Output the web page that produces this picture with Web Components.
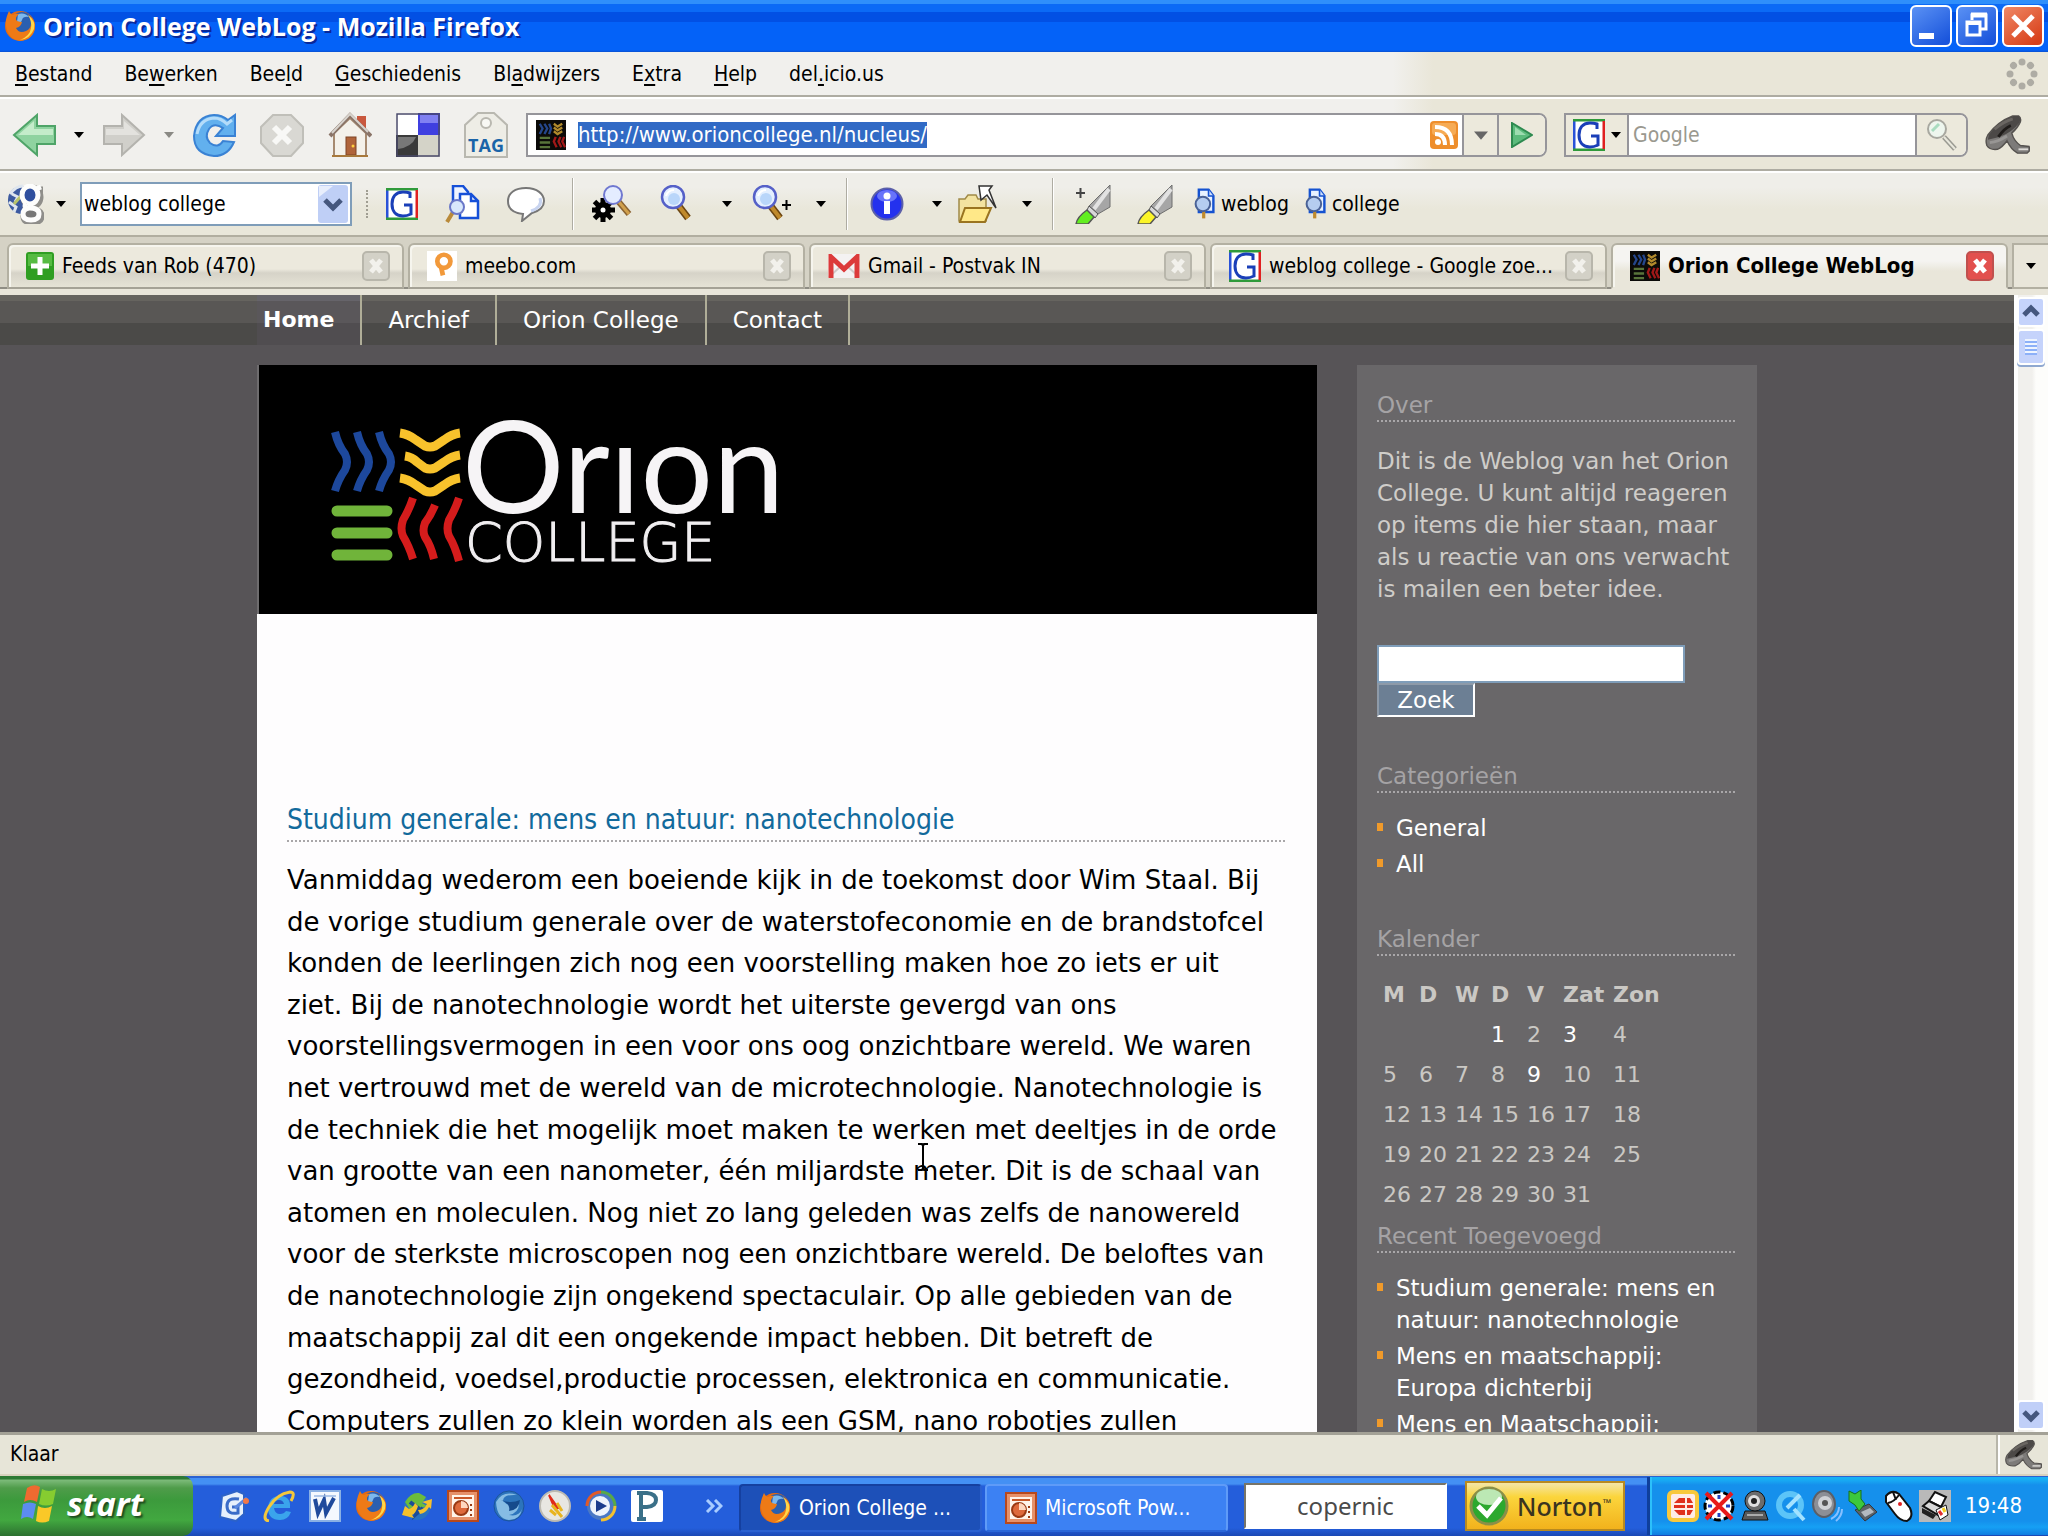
<!DOCTYPE html>
<html lang="nl">
<head>
<meta charset="utf-8">
<title>Orion College WebLog - Mozilla Firefox</title>
<style>
html,body{margin:0;height:100%}
body{font:21px/26px "DejaVu Sans Condensed","Noto Sans",sans-serif;color:#000;background:#575457;overflow:hidden}
</style>
</head>
<body>
<desktop-screen></desktop-screen>
<script>
const BASE = `
*{box-sizing:border-box}
button,input,select{font:inherit;color:inherit;margin:0;padding:0;border:0;background:none;border-radius:0;outline:0;appearance:none}
button{display:flex;align-items:center;justify-content:center}
a{color:inherit;text-decoration:none}
.grow{flex:1}
`;
const define = (name, css, html, after) => customElements.define(name, class extends HTMLElement {
  constructor() {
    super();
    const t = document.createElement('template');
    t.innerHTML = `<style>${BASE}${css}</style>${html}`;
    this.attachShadow({mode: 'open'}).append(t.content.cloneNode(true));
    if (after) after(this, this.shadowRoot);
  }
});

/* ---------- icons ---------- */
const lens = (h) => `<path d="M18 20 28 33" stroke="#6b4510" stroke-width="7"/><path d="M18 20 28 33" stroke="#c08a2c" stroke-width="4"/><ellipse cx="13" cy="12" rx="11" ry="11" fill="#e4efff" stroke="#5560c8" stroke-width="2.5"/><ellipse cx="14" cy="14" rx="6" ry="6" fill="#b9d6fa"/><path d="M6 11q2-6 8-6" stroke="#fff" stroke-width="2" fill="none"/>${h||''}`;
const docIcon = `<path d="M6 2h12l6 8v20H6z" fill="#e8f2ff" stroke="#1552d0" stroke-width="3"/><path d="M18 2v8h6" fill="#cfe0ff" stroke="#1552d0" stroke-width="2"/><path d="M12 27v11" stroke="#c08a2c" stroke-width="4"/><circle cx="11" cy="20" r="9" fill="#b5cdf0" stroke="#4a6296" stroke-width="2.5"/>`;
const orion = `<rect width="32" height="32" fill="#0b0a08"/><g fill="none" stroke-width="2.5"><path stroke="#24468c" d="M4 4l3 5-3 6M9 4l3 5-3 6M14 4l2 5-2 6"/><path stroke="#b18a2c" d="M19 4l4 3 5-3M19 8l4 3 5-3M19 12l4 3 5-3"/><path stroke="#58743a" d="M4 19h11M4 24h11M4 29h11"/><path stroke="#a01818" d="M21 18l-2 5 3 6M26 18l-2 5 3 6M30 18l-2 5 3 6"/></g>`;
const google = `<rect width="32" height="32" fill="#fff"/><path d="M1 0v32" stroke="#2a52d8" stroke-width="3"/><path d="M0 1h32M0 31h32" stroke="#2f9a3a" stroke-width="3"/><path d="M31 2v28" stroke="#e02020" stroke-width="3"/><path d="M24 10V5q-3-1-7-1C9 4 6 10 6 16s3 12 11 12q4 0 8-2v-9h-7" fill="none" stroke="#1a3fb8" stroke-width="3"/>`;
const firefox = `<circle cx="16" cy="16" r="15" fill="#e66a12"/><circle cx="18" cy="13" r="11" fill="#2a5fb0"/><path d="M14 4q7-2 11 3-6-1-7 3t-5 2z" fill="#7db8ec"/><path d="M2 16C1 10 3 6 5 1q2 4 4 4 3-2 6-1-5 4-2 7 3 1 5 1-1 5-6 6 3 6 10 3 5-2 5-8 0-5-3-8 8 4 7 13-2 12-15 13Q4 29 2 16z" fill="#ee7a16"/><path d="M24 5q8 6 6 14-4 10-14 11 10-4 11-12 1-7-3-13z" fill="#ffd84a"/>`;
const ppt = `<rect x="1" y="1" width="30" height="30" fill="#e6916a" stroke="#b8481c" stroke-width="2"/><rect x="5" y="5" width="22" height="22" fill="#fff4ea"/><path d="M7 8h18" stroke="#c85828" stroke-width="2"/><circle cx="14" cy="18" r="7" fill="#de6a3c" stroke="#9a3a14" stroke-width="2"/><path d="M14 18v-7a7 7 0 0 1 7 7z" fill="#ffd8c0"/><path d="M24 14v2m0 3v2m0 3v2" stroke="#9a3a14" stroke-width="2"/>`;
const shell = `<path d="M3 33Q1 27 4 22 14 8 30 2h6q3 2 2 6-3 7-9 12 2 8 9 13l9 1 1 4-3 3H35q-7-4-11-13-5 7-10 9Q6 38 3 33z" fill="#7d7b79" stroke="#55524f" stroke-width="1.500"/><path d="M5 22Q15 7 31 2h5q3 3 1 7-8 11-21 15l-12 3z" fill="#4c4947"/><path d="M15 24q6-9 13-12" fill="none" stroke="#1f1c1a" stroke-width="3"/><path d="M11 16q9-8 19-11" fill="none" stroke="#6a6662" stroke-width="3"/><path d="M6 30q9-1 18-7" fill="none" stroke="#989694" stroke-width="3"/><path d="M36 37h10" stroke="#dcdad6" stroke-width="2"/>`;
const close = (b, f, x) => `<rect x="1" y="1" width="26" height="28" rx="4" fill="${f}" stroke="${b}" stroke-width="2"/><path d="M9 9l10 12M19 9L9 21" stroke="${x}" stroke-width="5"/>`;
const hl = (c, p) => `<path d="M36 1v22L24 30 15 22z" fill="#a6a6a6" stroke="#6e6e6e"/><path d="M35 5 20 25" stroke="#e2e2e2" stroke-width="4"/><path d="M15 22l9 8-3 4-8-8z" fill="#d8d8d8" stroke="#555"/><path d="M13 26l7 7-6 7H2q1-7 11-14z" fill="${c}" stroke="#555" stroke-width="1.5"/>${p?'<path d="M2 9h9M6.500 4v10" stroke="#444" stroke-width="2"/>':''}`;
const winFrame = (c1, c2, id) => `<defs><linearGradient id="${id}" x2=".7" y2="1"><stop stop-color="${c1}"/><stop offset="1" stop-color="${c2}"/></linearGradient></defs><rect x="1" y="1" width="40" height="40" rx="5" fill="url(#${id})" stroke="#fff" stroke-width="2"/>`;
const ICONS = {
  caret: ['0 0 10 8', `<path d="M0 1h10L5 7z" fill="currentColor"/>`],
  firefox: ['0 0 32 32', firefox],
  min: ['0 0 42 42', winFrame('#5c93f5','#1a55dc','g') + `<rect x="9" y="28" width="15" height="6" fill="#fff"/>`],
  restore: ['0 0 42 42', winFrame('#5c93f5','#1a55dc','g') + `<path d="M16 15V10h14v14h-5" fill="none" stroke="#fff" stroke-width="3"/><path d="M15 10h16" stroke="#fff" stroke-width="5"/><rect x="11" y="17" width="13" height="13" fill="#2f6ce8" stroke="#fff" stroke-width="3"/><path d="M10 18h15" stroke="#fff" stroke-width="4"/>`],
  close: ['0 0 42 42', winFrame('#f08a68','#d8401a','g') + `<path d="M11 11l20 20M31 11L11 31" stroke="#fff" stroke-width="5"/>`],
  throbber: ['0 0 32 32', [0,1,2,3,4,5,6,7].map(i => `<circle cx="16" cy="4" r="3.500" fill="#aeaca4" transform="rotate(${i*45} 16 16)"/>`).join('')],
  back: ['0 0 44 44', `<path d="M2 22 25 2v11h18v18H25v11z" fill="#8fd3a0" stroke="#4fa468" stroke-width="2"/><path d="M6 22 22 8v8h19v6z" fill="#c4ecca"/>`],
  forward: ['0 0 44 44', `<path d="M42 22 20 2v11H2v18h18v11z" fill="#d0cfca" stroke="#b4b3ae" stroke-width="2"/><path d="M38 22 22 8v8H4v6z" fill="#e3e2de"/>`],
  reload: ['0 0 44 44', `<path d="M43 2v21H24l7-8q-9-6-14 1-5 8 1 14 8 6 13-2l11 1q-6 14-20 14Q2 41 2 23 4 3 22 2q8 0 14 5z" fill="#62b0ee" stroke="#3a82d4" stroke-width="2"/><path d="M5 21Q8 6 22 5q7 0 13 6l5-4" fill="none" stroke="#b4dcfa" stroke-width="3"/>`],
  stop: ['0 0 44 44', `<path d="M13 2h18l12 12v16L31 43H13L1 30V14z" fill="#d9d8d3" stroke="#c0bfb9" stroke-width="2"/><path d="M14 14l16 16M30 14L14 30" stroke="#f8f8f6" stroke-width="6"/>`],
  home: ['0 0 44 46', `<rect x="29" y="4" width="9" height="13" fill="#c9583e"/><path d="M6 21v23h32V21L22 6z" fill="#f4f1ea" stroke="#a68a70" stroke-width="2"/><path d="M2 24 22 3l21 21" fill="none" stroke="#8a7468" stroke-width="4"/><path d="M4 21 22 2l18 18" fill="none" stroke="#d8d4ce" stroke-width="2"/><rect x="18" y="25" width="10" height="18" fill="#b0643a" stroke="#7e4424"/><circle cx="25" cy="34" r="1.500" fill="#ffd040"/><path d="M4 44h36" stroke="#a8793c" stroke-width="2"/>`],
  delicious: ['0 0 44 44', `<rect width="22" height="22" fill="#fff"/><rect x="22" width="22" height="22" fill="#3f3fe0"/><rect x="24" y="2" width="18" height="8" fill="#8080f2"/><rect y="22" width="22" height="22" fill="#3a3a3a"/><path d="M2 24h18q-4 10-18 12z" fill="#787878"/><rect x="22" y="22" width="22" height="22" fill="#d4d3c8"/><path d="M1 1h42v42H1z" fill="none" stroke="#4a4a6a" stroke-width="1.500"/>`],
  tag: ['0 0 44 46', `<path d="M1 45V13L14 1h16l13 12v32z" fill="#eeede6" stroke="#b9b8b0" stroke-width="2"/><circle cx="22" cy="11" r="5" fill="#f8f8f4" stroke="#b9b8b0" stroke-width="2"/><text x="22" y="40" font-family="Open Sans, sans-serif" font-weight="700" font-size="18" text-anchor="middle" fill="#1a64a8">TAG</text>`],
  orion: ['0 0 32 32', orion],
  rss: ['0 0 28 28', `<rect width="28" height="28" rx="4" fill="#ee8e2c"/><rect x="2" y="2" width="24" height="12" rx="3" fill="#f6ab55"/><circle cx="8" cy="21" r="3" fill="#fff"/><path d="M5 13q10 0 10 11M5 6q17 0 17 18" fill="none" stroke="#fff" stroke-width="4"/>`],
  go: ['0 0 22 26', `<path d="M1 1 21 13 1 25z" fill="#5cbb7c" stroke="#2e8a50" stroke-width="2"/><path d="M4 5l11 8H4z" fill="#9ddcb0"/>`],
  google: ['0 0 32 32', google],
  magnify: ['0 0 32 32', `<path d="M18 18 29 30" stroke="#9a9a92" stroke-width="5"/><path d="M18 18 29 30" stroke="#e8e7dc" stroke-width="2"/><circle cx="11" cy="10" r="9" fill="#eef6ee" stroke="#a8a8a0" stroke-width="2"/><path d="M6 12 13 5" stroke="#a9dcc0" stroke-width="3"/>`],
  shell: ['0 0 48 44', shell],
  globe: ['0 0 36 40', `<circle cx="14" cy="16" r="14" fill="#3c5aa0"/><path d="M2 10q6-8 13-8M1 18l7 5-2 5M4 10l6 3-3 5" stroke="#dfe6ee" stroke-width="3" fill="none"/><path d="M6 20l7-8" stroke="#b9c46a" stroke-width="3"/><g fill="none" stroke="#8f8e8a" stroke-width="7"><ellipse cx="24" cy="13" rx="8" ry="9"/><path d="M32 6h3M19 21q-3 5 4 5 10 0 10 6t-9 6q-8 0-8-6 0-5 6-6"/></g><g fill="#2f4f9e" stroke="#fdfdfc" stroke-width="5"><ellipse cx="22" cy="11" rx="8" ry="9"/><path fill="#777" d="M28 5l5-2M18 19q-3 5 4 5 9 0 9 6t-8 6q-8 0-8-6 0-5 6-6"/></g>`],
  combo: ['0 0 30 38', `<rect width="30" height="38" rx="3" fill="#bfcff6"/><path d="M1 1h14L1 12z" fill="#e8eefc"/><path d="M7 15l8 8 8-8" fill="none" stroke="#45577e" stroke-width="5"/>`],
  pages: ['0 0 36 38', `<path d="M9 1h10l5 6v18H9z" fill="#eef4ff" stroke="#1650d8" stroke-width="2.500"/><path d="M16 9h11l7 7v17H16z" fill="#fff" stroke="#1650d8" stroke-width="2.500"/><path d="M27 9v7h7" fill="none" stroke="#1650d8" stroke-width="2.500"/><path d="M9 27 3 37" stroke="#b98a3a" stroke-width="4"/><circle cx="13" cy="22" r="7" fill="#d8e8fc" stroke="#6a78c8" stroke-width="2"/>`],
  bubble: ['0 0 40 36', `<path d="M20 2c11 0 18 6 18 13 0 6-5 10-12 12L16 35l1-7C7 27 2 22 2 15 2 7 9 2 20 2z" fill="#fff" stroke="#777" stroke-width="2"/><path d="M34 12q3 9-9 13" fill="none" stroke="#c8d4f0" stroke-width="3"/>`],
  gearlens: ['0 0 40 38', `<g transform="translate(11 25)"><circle r="8" fill="#000"/>${[0,1,2,3,4,5,6,7].map(i => `<rect x="-2.500" y="-12" width="5" height="7" fill="#000" transform="rotate(${i*45})"/>`).join('')}<circle r="2.500" fill="#fff"/></g><path d="M26 16 37 29" stroke="#8a6230" stroke-width="6"/><path d="M27 17 37 29" stroke="#d0a04c" stroke-width="3"/><circle cx="21" cy="10" r="9" fill="#e4ecff" stroke="#7078d0" stroke-width="2"/>`],
  lens: ['0 0 34 38', lens()],
  lensplus: ['0 0 40 38', lens(`<path d="M30 20h9M34.500 15v10" stroke="#000" stroke-width="2"/>`)],
  info: ['0 0 34 34', `<circle cx="17" cy="17" r="15.500" fill="#2431ee" stroke="#5c60a8" stroke-width="2"/><ellipse cx="17" cy="9" rx="10" ry="6" fill="#8690ff" opacity=".7"/><circle cx="17" cy="9" r="3.500" fill="#fff"/><rect x="14" y="14" width="6" height="13" fill="#fff"/>`],
  folder: ['0 0 40 40', `<path d="M1 37V15h6l3-4h8l2 4h8v22z" fill="#f3e3a0" stroke="#a08a48" stroke-width="1.500"/><path d="M7 24h26l-6 14H2z" fill="#ffe888" stroke="#9a7420" stroke-width="2"/><path d="M21 2h13l-3 4 7 18-9-13-6 5z" fill="#fff" stroke="#333" stroke-width="1.500"/>`],
  hlgreen: ['0 0 38 40', hl('#62ee20', 1)],
  hlyellow: ['0 0 38 40', hl('#fbf528')],
  doc: ['0 0 26 40', docIcon],
  plus: ['0 0 28 28', `<rect width="28" height="28" rx="3" fill="#2f9e22"/><rect x="2" y="2" width="24" height="12" fill="#56bb42"/><path d="M14 5v18M5 14h18" stroke="#fff" stroke-width="5"/>`],
  meebo: ['0 0 32 32', `<rect width="32" height="32" fill="#fff"/><circle cx="18" cy="11" r="7" fill="none" stroke="#f2993a" stroke-width="5"/><path d="M15 17l2 9" stroke="#f2993a" stroke-width="5"/>`],
  gmail: ['0 0 32 24', `<rect width="32" height="24" fill="#f4f2f2"/><path d="M1 23 13 12M31 23 19 12" stroke="#d0c8c8" stroke-width="2"/><path d="M3 24V3l13 12L29 3v21" fill="none" stroke="#dc3a3a" stroke-width="5"/>`],
  tabx: ['0 0 28 30', close('#b8b6ab','#d3d1c7','#f2f1ec')],
  tabxred: ['0 0 28 30', close('#c0504e','#e2504e','#fff')],
  up: ['0 0 28 30', `<rect x="1" y="1" width="26" height="28" rx="3" fill="#c5d3fb" stroke="#fff" stroke-width="2"/><path d="M7 18l7-7 7 7" fill="none" stroke="#45577e" stroke-width="5"/>`],
  down: ['0 0 28 30', `<rect x="1" y="1" width="26" height="28" rx="3" fill="#c0cff8" stroke="#fff" stroke-width="2"/><path d="M7 12l7 7 7-7" fill="none" stroke="#45577e" stroke-width="5"/>`],
  flag: ['0 0 36 40', `<path d="M6 4Q13-1 19 3l-3 15q-7-4-13 0z" fill="#ee6a30"/><path d="M21 5q7 4 14 0l-3 15q-7 3-14 0z" fill="#86cc30"/><path d="M2 20q7-3 13 0l-3 15q-6-4-12 0z" fill="#5c8cf0"/><path d="M17 22q7 4 14 0l-3 15q-7 3-13 0z" fill="#fac828"/>`],
  desktop: ['0 0 32 32', `<path d="M5 6 20 1l7 3v20l-8 7-16-4z" fill="#e6f0fc" stroke="#2c62c8" stroke-width="2"/><path d="M22 9q-12-2-12 7t11 7v-6h-6" fill="none" stroke="#3a6cc8" stroke-width="3"/><path d="M18 18 30 8" stroke="#5a88e0" stroke-width="3"/><circle cx="29" cy="11" r="3" fill="#f07848"/>`],
  ie: ['0 0 32 32', `<path d="M27 18H11q1 6 6 6 4 0 6-3l5 1q-3 8-11 8Q5 30 5 18 6 6 17 6q11 0 10 12z" fill="#3aa4ec"/><path d="M11 14h10q-1-4-5-4t-5 4z" fill="#2459c8"/><path d="M6 31Q-2 30 6 17T27 2q6 0 1 9" fill="none" stroke="#f4c83c" stroke-width="3"/>`],
  word: ['0 0 32 32', `<rect x="1" y="1" width="30" height="30" fill="#f4f8fe" stroke="#8ab0e4" stroke-width="2"/><path d="M6 9l3 14 6-13 2 13 8-15" fill="none" stroke="#1f4a9c" stroke-width="4"/><path d="M5 6h22" stroke="#9ab8e4" stroke-width="1.500"/>`],
  msn: ['0 0 32 32', `<circle cx="16" cy="17" r="13" fill="#2a72c0"/><path d="M4 12Q10 2 18 3l7 4-4 6 5 3-9 3-5 5z" fill="#6cbc3c"/><path d="M9 12l8 6-2 6 7-6" fill="none" stroke="#1c4c98" stroke-width="4"/><path d="M1 25l3-9 4 3q4-1 6-6l3 3q-2 7-6 9l2 3z" fill="#f6c02c"/><path d="M17 20q6 0 9-6l-5-2 10-3-1 10-2-2q-3 6-9 7z" fill="#f6c02c"/>`],
  ppt: ['0 0 32 32', ppt],
  thunder: ['0 0 32 32', `<circle cx="16" cy="16" r="15" fill="#2c74bc" stroke="#1c549c"/><path d="M3 12Q10 0 24 5q-14-1-14 6 6 7 16 2 0 10-10 12 10 2 13-6-2 11-13 11Q4 29 3 12z" fill="#86bce4"/><path d="M8 10q10 4 19 0-1 10-11 11 2-7-8-11z" fill="#154a8c"/>`],
  compass: ['0 0 32 32', `<circle cx="16" cy="16" r="15" fill="#e8e7e2" stroke="#bcbab2" stroke-width="2"/><path d="M10 5l9 13-3 1z" fill="#e02a1a" stroke="#e02a1a" stroke-width="2"/><path d="M13 15l10 12M11 20l6 5M18 13l5 8" stroke="#e8b420" stroke-width="3"/>`],
  wmp: ['0 0 32 32', `<circle cx="16" cy="16" r="14" fill="#4a78c4"/><path d="M16 2a14 14 0 0 0-14 14" fill="none" stroke="#e05a28" stroke-width="3"/><path d="M16 2a14 14 0 0 1 14 14" fill="none" stroke="#58a848" stroke-width="3"/><path d="M30 16a14 14 0 0 1-14 14" fill="none" stroke="#f2c030" stroke-width="3"/><circle cx="15" cy="16" r="10" fill="#eef3fb"/><path d="M11 10l11 6-11 6z" fill="#1c3c8c"/>`],
  pdoc: ['0 0 32 32', `<rect width="32" height="32" rx="2" fill="#fff"/><path d="M10 3v26M6 29h9M6 3h10q9 1 9 7t-9 7h-4" fill="none" stroke="#3a7088" stroke-width="4"/>`],
  norton: ['0 0 40 40', `<circle cx="20" cy="20" r="18" fill="#2ca82e" stroke="#8a8f48" stroke-width="3"/><ellipse cx="20" cy="11" rx="13" ry="8" fill="#bce8b4"/><path d="M9 20l9 9 14-17" fill="none" stroke="#fff" stroke-width="5"/>`],
  tray1: ['0 0 32 32', `<rect x="2" y="2" width="28" height="28" rx="4" fill="#fdece6" stroke="#f8c83c" stroke-width="4"/><path d="M7 13l5-5h6v5zM20 8h3l3 5h-6zM7 15h11v3H7zM20 15h6v3h-6zM7 20h11v5h-6zM20 20h6l-3 5h-3z" fill="#e0301c"/>`],
  tray2: ['0 0 32 32', `<circle cx="16" cy="16" r="14" fill="#fff" stroke="#000" stroke-width="3" stroke-dasharray="7 3"/><path d="M16 5v4m0 14v4M5 16h4m14 0h4" stroke="#2040c0" stroke-width="3"/><path d="M3 3l26 26M29 3L3 29" stroke="#e81a1a" stroke-width="4"/>`],
  tray3: ['0 0 32 32', `<path d="M3 30l3-9h20l3 9z" fill="#5a5a5a" stroke="#111"/><circle cx="16" cy="11" r="10" fill="#6c6c6c" stroke="#111"/><circle cx="15" cy="11" r="6" fill="#e0e0e0"/><circle cx="15" cy="11" r="3" fill="#222"/><path d="M8 25h16" stroke="#aaa" stroke-width="2"/>`],
  tray4: ['0 0 32 32', `<circle cx="15" cy="15" r="11" fill="none" stroke="#5cc4f8" stroke-width="6"/><path d="M12 18 25 5M19 19l10 11" stroke="#a4e2ff" stroke-width="4"/>`],
  tray5: ['0 0 32 32', `<ellipse cx="13" cy="14" rx="11" ry="13" fill="#8c8f96" stroke="#5c5f66" stroke-width="2"/><circle cx="14" cy="13" r="7" fill="#d0d2d6"/><circle cx="14" cy="13" r="3" fill="#555"/><path d="M20 29q8-4 8-12M25 31q6-5 6-12" fill="none" stroke="#88c0ff" stroke-width="2"/>`],
  tray6: ['0 0 32 32', `<path d="M8 20 22 14l8 8-12 9z" fill="#5c6268" stroke="#33373c"/><path d="M14 22l9-4 4 4-9 5z" fill="#b4bac0"/><path d="M2 1l6 3 6-4v9l4 5-6 7-4-6-6-4z" fill="#3cc83c" stroke="#187018"/>`],
  tray7: ['0 0 32 32', `<path d="M3 6q6-7 13-2l11 14q4 9-3 13-7 0-12-7L3 12z" fill="#fff" stroke="#111" stroke-width="2"/><path d="M5 13q6-1 11-8M10 2l3 8" fill="none" stroke="#111" stroke-width="2"/><circle cx="17" cy="14" r="2" fill="#e02020"/>`],
  tray8: ['0 0 32 32', `<rect width="32" height="32" fill="#b9b9b9"/><path d="M10 11 16 2l11 5-5 10z" fill="#fff" stroke="#111" stroke-width="2"/><path d="M4 16l6-5 12 6-3 8z" fill="#d8d8d8" stroke="#111" stroke-width="2"/><path d="M3 18l14 7-3 4-11-6z" fill="#222"/><path d="M17 20l10-5 2 10-8 5z" fill="#fff" stroke="#111"/><path d="M20 21l3 4" stroke="#e03030" stroke-width="3"/><path d="M24 18l2 4" stroke="#f4d020" stroke-width="3"/>`],
  chevrons: ['0 0 18 14', `<path d="M2 1l6 6-6 6M10 1l6 6-6 6" fill="none" stroke="#a8ccff" stroke-width="3"/>`],
  ibeam: ['0 0 14 28', `<path d="M2 1h4l1 2 1-2h4M7 2v24M2 27h4l1-2 1 2h4" fill="none" stroke="#000" stroke-width="2"/>`],
};
define('ui-icon', ':host{display:block;flex:none}svg{display:block}', '', (el, root) => {
  const [box, body] = ICONS[el.getAttribute('name')];
  const [, , w, h] = box.split(' ');
  const W = el.getAttribute('w') || w, H = el.getAttribute('h') || Math.round(h * W / w);
  root.innerHTML += `<svg width="${W}" height="${H}" viewBox="${box}" preserveAspectRatio="none" aria-hidden="true">${body}</svg>`;
});

/* ---------- window chrome ---------- */
define('title-bar', `
:host{display:flex;align-items:center;height:52px;flex:none;padding:0 4px;gap:4px;background:linear-gradient(#2f8ffb 0 4px,#0b6af6 4px 12px,#0250e4 12px 22px,#0462f8 22px 50px,#0a50d0)}
h1{margin:0 0 0 3px;flex:1;font:700 25px/34px "Open Sans","Noto Sans",sans-serif;color:#fff;text-shadow:2px 2px 0 #08289a}
`, `<ui-icon name="firefox"></ui-icon><h1>Orion College WebLog - Mozilla Firefox</h1>
<button aria-label="Minimaliseren"><ui-icon name="min"></ui-icon></button><button aria-label="Verkleinen"><ui-icon name="restore"></ui-icon></button><button aria-label="Sluiten"><ui-icon name="close"></ui-icon></button>`);

define('menu-bar', `
:host{display:flex;align-items:center;height:47px;flex:none;padding:0 10px 2px 15px;background:linear-gradient(90deg,#f1f0ed 68%,#e9e6d8 70%);border-bottom:2px solid #fff;box-shadow:inset 0 -2px #aeaca2}
nav{display:flex;gap:32px;flex:1}
u{text-underline-offset:3px}
`, `<nav><a href="#"><u>B</u>estand</a><a href="#">Be<u>w</u>erken</a><a href="#">Bee<u>l</u>d</a><a href="#"><u>G</u>eschiedenis</a><a href="#">Bl<u>a</u>dwijzers</a><a href="#">E<u>x</u>tra</a><a href="#"><u>H</u>elp</a><a href="#">del<u>.</u>icio.us</a></nav><ui-icon name="throbber"></ui-icon>`);

define('nav-toolbar', `
:host{display:flex;align-items:center;height:74px;flex:none;padding:0 18px 0 12px;background:linear-gradient(90deg,#f1f0ed 68%,#e9e6d8 70%);border-bottom:2px solid #fff;box-shadow:inset 0 -2px #aeaca2}
.tools{display:flex;align-items:center;gap:24px}
.pair{display:flex;align-items:center;gap:18px}
.off{color:#8a8984}
.box{display:flex;height:44px;border:2px solid #96959a;border-radius:0 8px 8px 0;background:#fff;align-items:stretch}
.box>*{display:flex;align-items:center}
.url{flex:1;margin-left:18px;padding-left:8px}
.url input{field-sizing:content;height:26px;align-self:center;background:#316ac5;color:#fff;margin-left:12px;font-size:22px}
.rss{margin-right:4px}
.cell{background:#ece9dc;border-left:2px solid #96959a;justify-content:center}
.cell:last-child{border-radius:0 6px 6px 0}
.drop{width:35px;color:#666}
.go{width:48px}
.engine{width:61px;gap:6px;border:0}
.lens{width:51px}
.search{width:404px;margin:0 16px 0 17px}
.search input{flex:1;min-width:0;padding-left:4px;background:#fff;border-left:2px solid #96959a}
.search input::placeholder{color:#9a998f;opacity:1}
`, `<div class="tools"><div class="pair"><button aria-label="Vorige"><ui-icon name="back"></ui-icon></button><ui-icon name="caret"></ui-icon><button aria-label="Volgende"><ui-icon name="forward"></ui-icon></button><ui-icon class="off" name="caret"></ui-icon><button aria-label="Vernieuwen"><ui-icon name="reload"></ui-icon></button></div>
<button aria-label="Stoppen"><ui-icon name="stop"></ui-icon></button><button aria-label="Startpagina"><ui-icon name="home"></ui-icon></button><button aria-label="del.icio.us"><ui-icon name="delicious"></ui-icon></button><button><ui-icon name="tag"></ui-icon></button></div>
<div class="box url"><ui-icon name="orion" w="30"></ui-icon><input aria-label="Adres" value="http://www.orioncollege.nl/nucleus/"><span class="grow"></span><ui-icon class="rss" name="rss"></ui-icon><button class="cell drop" aria-label="Geschiedenis"><ui-icon name="caret" w="14"></ui-icon></button><button class="cell go" aria-label="Ga"><ui-icon name="go"></ui-icon></button></div>
<div class="box search"><button class="cell engine" aria-label="Zoekmachine"><ui-icon name="google"></ui-icon><ui-icon name="caret"></ui-icon></button><input aria-label="Zoeken" placeholder="Google"><button class="cell lens" aria-label="Zoek"><ui-icon name="magnify"></ui-icon></button></div>
<ui-icon name="shell" w="46"></ui-icon>`);

define('search-toolbar', `
:host{display:flex;align-items:center;height:62px;flex:none;padding-left:8px;background:linear-gradient(#efeee9 0 14px,#e9e7da 36px)}
.combo{display:flex;align-items:center;width:272px;height:44px;margin:0 14px 0 14px;border:2px solid #7f9db9;background:#fff;padding:2px}
select{flex:1;height:30px}
.dots{width:2px;height:28px;border-left:2px dotted #a09e92;margin-right:18px}
.sep{width:2px;height:52px;background:#aeaca2;border-right:1px solid #fff}
.set{display:flex;align-items:center}
.txt{gap:6px;height:32px}
`, `<button aria-label="Menu" style="gap:12px"><ui-icon name="globe"></ui-icon><ui-icon name="caret"></ui-icon></button>
<div class="combo"><select aria-label="Zoekterm"><option>weblog college</option></select><ui-icon name="combo"></ui-icon></div><span class="dots"></span>
<div class="set" style="gap:26px"><ui-icon name="google"></ui-icon><ui-icon name="pages"></ui-icon><ui-icon name="bubble"></ui-icon><span class="sep"></span></div>
<div class="set" style="gap:28px;margin:0 20px 0 18px"><ui-icon name="gearlens"></ui-icon><ui-icon name="lens"></ui-icon><ui-icon name="caret"></ui-icon></div>
<div class="set" style="gap:24px;margin-right:20px"><ui-icon name="lensplus"></ui-icon><ui-icon name="caret"></ui-icon></div><span class="sep"></span>
<div class="set" style="gap:28px;margin:0 16px 0 22px"><ui-icon name="info"></ui-icon><ui-icon name="caret"></ui-icon></div>
<div class="set" style="gap:24px;margin-right:20px"><ui-icon name="folder"></ui-icon><ui-icon name="caret"></ui-icon></div><span class="sep"></span>
<div class="set" style="gap:24px;margin:0 20px"><ui-icon name="hlgreen"></ui-icon><ui-icon name="hlyellow"></ui-icon></div>
<div class="set" style="gap:16px"><button class="txt"><ui-icon name="doc" w="21"></ui-icon>weblog</button><button class="txt"><ui-icon name="doc" w="21"></ui-icon>college</button></div>`);

define('browser-tab', `
:host{display:flex;align-items:center;flex:1 1 0;min-width:0;height:46px;padding:0 12px 0 17px;gap:8px;border:2px solid #b3b0a2;border-bottom-color:#a5a296;border-radius:6px 6px 0 0;background:linear-gradient(#ece9dd 0 24px,#d6d3c8 28px,#e6e3d6 42px);box-shadow:inset 2px 2px #f6f5ee;font-size:21px}
:host([active]){font-size:22px;font-weight:700;background:linear-gradient(#f5f4f1 0 16px,#e9e6da 26px);border-bottom-color:#e9e6da;color:#000}
.label{flex:1;overflow:hidden;white-space:nowrap}
`, `<slot name="icon"></slot><span class="label"><slot></slot></span><button aria-label="Tabblad sluiten"></button>`, (el, root) => {
  root.querySelector('button').innerHTML = `<ui-icon name="${el.hasAttribute('active') ? 'tabxred' : 'tabx'}"></ui-icon>`;
});
define('tab-strip', `
:host{display:flex;height:60px;flex:none;padding:7px 0 0 7px;gap:4px;background:#d5d2c5;border-bottom:6px solid #e9e6da;box-shadow:inset 0 2px #b1aea0,0 -2px 0 #8f8d84 inset;align-items:flex-end}
.more{width:36px;height:46px;background:#e9e6da;border:2px solid #b3b0a2;border-right:0}
`, `<browser-tab><ui-icon slot="icon" name="plus"></ui-icon>Feeds van Rob (470)</browser-tab>
<browser-tab><ui-icon slot="icon" name="meebo" w="30"></ui-icon>meebo.com</browser-tab>
<browser-tab><ui-icon slot="icon" name="gmail"></ui-icon>Gmail - Postvak IN</browser-tab>
<browser-tab><ui-icon slot="icon" name="google"></ui-icon>weblog college - Google zoe...</browser-tab>
<browser-tab active><ui-icon slot="icon" name="orion" w="30"></ui-icon>Orion College WebLog</browser-tab>
<button class="more" aria-label="Alle tabbladen"><ui-icon name="caret"></ui-icon></button>`);

/* ---------- page ---------- */
define('site-nav', `
:host{display:block;background:linear-gradient(#66645f 0 6px,#595755 6px 28px,#4b4a48 28px)}
nav{width:1500px;max-width:100%;margin:0 auto;display:flex}
a{padding:0 26px;height:50px;line-height:50px;color:#fff;border-right:2px solid #b0ae98;font-family:"DejaVu Sans","Noto Sans",sans-serif;font-size:23px}
a:first-child{font-weight:700;font-size:22px;padding-left:6px;background:linear-gradient(#66646a 0 6px,#5a575a 6px 28px,#504d50 28px)}
`, `<nav><a href="#">Home</a><a href="#">Archief</a><a href="#">Orion College</a><a href="#">Contact</a></nav>`);

define('site-logo', `:host{display:block;background:#000;height:249px;border-left:2px solid #6e6c6e}svg{display:block}`,
`<svg width="640" height="249" viewBox="0 0 640 249" role="img" aria-label="Orion College">
<g fill="none" stroke-width="8" stroke-linecap="butt" stroke-linejoin="round">
<path stroke="#1d489c" d="M76 67q3 13 10 22 4 8 0 16-7 10-10 21M98 67q3 13 10 22 4 8 0 16-7 10-10 21M120 67q3 13 10 22 4 8 0 16-7 10-10 21"/>
<path stroke="#f8c22c" stroke-width="9" d="M141 68q8 1 16 7l9 6q5 2 10 0l9-6q8-6 16-7M146 91q7 1 12 6l8 6q5 2 10 0l9-6q8-6 16-7M141 113q8 1 16 7l9 6q5 2 10 0l9-6q8-6 16-7"/>
<path stroke="#d51c1c" d="M154 133q-4 12-10 22-3 9 0 16 6 10 10 23M176 140q-4 10-10 18-3 8 0 14 6 9 9 22M200 133q-4 12-10 22-3 9 0 16 6 10 10 25"/>
</g>
<path stroke="#70b43a" stroke-width="11" stroke-linecap="round" d="M78 146h50M78 168h50M78 190h50"/>
<text x="203" y="148" font-family="Lato, sans-serif" font-size="128" fill="#f6f4f6">Orion</text>
<rect x="352" y="44" width="32" height="34" fill="#000"/>
<text x="206" y="196" font-family="'DejaVu Sans Light','DejaVu Sans',sans-serif" font-weight="200" font-size="54" fill="#f0eef0" stroke="#f0eef0">COLLEGE</text>
</svg>`);

define('weblog-post', `
:host{display:block;padding:186px 32px 0 30px}
h2{margin:0 0 18px;font-size:28px;font-weight:400;line-height:40px;color:#126a9c;border-bottom:2px dotted #a9a7a9}
p{margin:0;font-size:26px;line-height:1.6;white-space:nowrap;font-family:"DejaVu Sans","Noto Sans",sans-serif}
`, `<h2><slot name="title"></slot></h2><p><slot></slot></p>`);

define('side-section', `
:host{display:block}
h3{margin:0 0 19px;font-weight:400;font-size:23px;line-height:30px;color:#a5a3a5;border-bottom:2px dotted #a9a7a9}
`, `<h3><slot name="title"></slot></h3><slot></slot>`);

define('side-links', `
:host{display:block}
ul{list-style:none;margin:0;padding:0}
li{display:flex;gap:13px;margin-bottom:4px;line-height:32px;color:#fff}
li::before{content:"";flex:none;width:6px;height:8px;margin-top:11px;background:#f09a2a}
`, `<ul></ul>`, (el, root) => {
  root.querySelector('ul').innerHTML = el.getAttribute('items').split('|').map(t => `<li><a href="#">${t.replace('/', '<br>')}</a></li>`).join('');
});

define('month-calendar', `
:host{display:block}
table{border-collapse:collapse;table-layout:fixed;width:280px;margin-left:6px;font-size:22px}
th,td{padding:0;height:40px;text-align:left;line-height:32px;white-space:nowrap;color:#cac8c4}
a{color:#fff}
`, `<table><colgroup><col width="36"><col width="36"><col width="36"><col width="36"><col width="36"><col width="50"><col width="50"></colgroup><thead><tr><th>M</th><th>D</th><th>W</th><th>D</th><th>V</th><th>Zat</th><th>Zon</th></tr></thead><tbody></tbody></table>`, (el, root) => {
  let html = '';
  for (let row = 0; row < 5; row++) {
    html += '<tr>';
    for (let col = 0; col < 7; col++) {
      const d = row * 7 + col - 2;
      html += `<td>${d < 1 || d > 31 ? '' : [1, 3, 9].includes(d) ? `<a href="#">${d}</a>` : d}</td>`;
    }
    html += '</tr>';
  }
  root.querySelector('tbody').innerHTML = html;
});

define('side-bar', `
:host{display:block;width:400px;padding:25px 22px 0 20px;background:#696769;color:#cfcdc9;font:23px/32px "DejaVu Sans","Noto Sans",sans-serif}
p{margin:0 0 40px;padding-top:4px;white-space:nowrap}
form{margin:0 0 44px}
input{display:block;width:308px;height:38px;background:#fff;border:2px solid #7f9db9;color:#000}
button{width:98px;height:34px;background:#6c7f94;color:#fff;border:2px solid;border-color:#8e9aa8 #fff #fff #8e9aa8}
side-links{margin-bottom:44px}
.cal{margin-bottom:6px}
`, `<side-section><span slot="title">Over</span><p>Dit is de Weblog van het Orion<br>College. U kunt altijd reageren<br>op items die hier staan, maar<br>als u reactie van ons verwacht<br>is mailen een beter idee.</p><form onsubmit="return false"><input aria-label="Zoekterm"><button>Zoek</button></form></side-section>
<side-section><span slot="title">Categorieën</span><side-links items="General|All"></side-links></side-section>
<side-section class="cal"><span slot="title">Kalender</span><month-calendar></month-calendar></side-section>
<side-section><span slot="title">Recent Toegevoegd</span><side-links items="Studium generale: mens en/natuur: nanotechnologie|Mens en maatschappij:/Europa dichterbij|Mens en Maatschappij:"></side-links></side-section>`);

define('scroll-bar', `
:host{display:flex;flex-direction:column;align-items:center;width:34px;background:linear-gradient(90deg,#fff 0 4px,#f1f0ed 4px 18px,#fdfdfb 22px);padding:2px 0}
.thumb{width:28px;height:36px;margin-top:2px;border:2px solid #fff;border-radius:4px;background:repeating-linear-gradient(#eef4fe 0 2px,#8cb0f8 2px 4px) center/12px 16px no-repeat,#c5d3fb;box-shadow:0 2px #8fa8d0}
`, `<button aria-label="Omhoog"><ui-icon name="up"></ui-icon></button><div class="thumb"></div><span class="grow"></span><button aria-label="Omlaag"><ui-icon name="down"></ui-icon></button>`);

define('web-page', `
:host{display:flex;flex:1;min-height:0;overflow:hidden;background:#575457;position:relative}
.view{flex:1;min-width:0;overflow:hidden}
.cols{width:1500px;max-width:100%;margin:20px auto 0;display:flex;gap:40px;align-items:stretch}
main{flex:1;min-width:0;background:#fefdfe}
ui-icon{position:absolute;left:916px;top:848px}
`, `<div class="view"><site-nav></site-nav><div class="cols"><main><site-logo></site-logo><weblog-post><span slot="title">Studium generale: mens en natuur: nanotechnologie</span>Vanmiddag wederom een boeiende kijk in de toekomst door Wim Staal. Bij<br>de vorige studium generale over de waterstofeconomie en de brandstofcel<br>konden de leerlingen zich nog een voorstelling maken hoe zo iets er uit<br>ziet. Bij de nanotechnologie wordt het uiterste gevergd van ons<br>voorstellingsvermogen in een voor ons oog onzichtbare wereld. We waren<br>net vertrouwd met de wereld van de microtechnologie. Nanotechnologie is<br>de techniek die het mogelijk moet maken te werken met deeltjes in de orde<br>van grootte van een nanometer, één miljardste meter. Dit is de schaal van<br>atomen en moleculen. Nog niet zo lang geleden was zelfs de nanowereld<br>voor de sterkste microscopen nog een onzichtbare wereld. De beloftes van<br>de nanotechnologie zijn ongekend spectaculair. Op alle gebieden van de<br>maatschappij zal dit een ongekende impact hebben. Dit betreft de<br>gezondheid, voedsel,productie processen, elektronica en communicatie.<br>Computers zullen zo klein worden als een GSM, nano robotjes zullen</weblog-post></main><side-bar></side-bar></div></div><scroll-bar></scroll-bar><ui-icon name="ibeam"></ui-icon>`);

/* ---------- bottom ---------- */
define('status-bar', `
:host{display:flex;align-items:stretch;height:44px;flex:none;padding-left:10px;background:#e7e5d8;border-top:3px solid #a3a196;border-bottom:2px solid #d8d2be;line-height:38px}
.cell{display:flex;align-items:center;width:50px;padding-left:4px;border-left:2px solid #fff;box-shadow:-2px 0 #b8b6aa}
`, `<span class="grow">Klaar</span><span class="cell"><ui-icon name="shell" w="38" h="32"></ui-icon></span>`);

define('task-button', `
:host{display:flex;align-items:center;width:243px;height:48px;padding:0 18px;gap:8px;border-radius:4px;color:#fff;background:#3c81f3;border:2px solid #5f9bf8;border-bottom-color:#2a66d8}
:host([pressed]){background:#1d50b8;border-color:#1540a0 #2a60d0 #2a60d0 #1540a0}
`, `<slot name="icon"></slot><slot></slot>`);

define('task-bar', `
:host{display:flex;align-items:center;height:60px;flex:none;color:#fff;background:linear-gradient(#2c62d0 0 2px,#4490f4 2px 8px,#245edb 10px 52px,#1a48b4)}
.start{width:193px;height:60px;justify-content:flex-start;padding:0 0 4px 21px;gap:10px;border-radius:0 10px 10px 0;background:linear-gradient(#2d7a34 0 3px,#7dbb7a 4px,#4f9c4a 12px,#3c9a3c 24px,#42a840 44px,#2c7030);font:italic 700 33px/40px "Open Sans","Noto Sans",sans-serif;text-shadow:2px 2px 2px #1d4a1e}
.quick{display:flex;gap:14px;margin:0 42px 0 24px}
.tasks{display:flex;gap:3px;margin:4px 16px 0 16px}
.cop{display:flex;align-items:center;justify-content:center;width:203px;height:46px;margin-right:18px;background:#fff;border:2px solid #777468;border-right-color:#fff;border-bottom-color:#fff;color:#4a4a4a;font:24px/30px "Noto Sans",sans-serif}
.nor{display:flex;align-items:center;gap:8px;width:160px;height:50px;padding-left:2px;border:2px solid #b88a20;background:linear-gradient(#f4e6a8,#fbd53c 30%,#f2b21c);color:#3a3420;font:500 25px/30px "Noto Sans",sans-serif;margin-right:22px;white-space:nowrap}
.nor sup{font-size:11px;line-height:1}
.tray{display:flex;flex:1;height:58px;align-items:center;gap:4px;padding:0 26px 0 17px;border-left:3px solid #0f3f9c;background:linear-gradient(#18b0f4 0 2px,#1590ec 8px 44px,#16a0f4 50px,#0f7ce0);box-shadow:inset 2px 0 #2cc0fa;font-size:22px}
.tray time{margin-left:auto}
`, `<button class="start"><ui-icon name="flag"></ui-icon>start</button>
<div class="quick">${['desktop','ie','word','firefox','msn','ppt','thunder','compass','wmp','pdoc'].map(n => `<ui-icon name="${n}"></ui-icon>`).join('')}</div>
<ui-icon name="chevrons"></ui-icon>
<div class="tasks"><task-button pressed><ui-icon slot="icon" name="firefox"></ui-icon>Orion College ...</task-button><task-button><ui-icon slot="icon" name="ppt"></ui-icon>Microsoft Pow...</task-button></div>
<div class="cop">copernic</div><div class="nor"><ui-icon name="norton"></ui-icon><span>Norton<sup>™</sup></span></div>
<div class="tray">${[1,2,3,4,5,6,7,8].map(n => `<ui-icon name="tray${n}"></ui-icon>`).join('')}<time>19:48</time></div>`);

define('desktop-screen', `:host{display:flex;flex-direction:column;height:100vh}`,
`<title-bar></title-bar><menu-bar></menu-bar><nav-toolbar></nav-toolbar><search-toolbar></search-toolbar><tab-strip></tab-strip><web-page></web-page><status-bar></status-bar><task-bar></task-bar>`);
</script>
</body>
</html>
